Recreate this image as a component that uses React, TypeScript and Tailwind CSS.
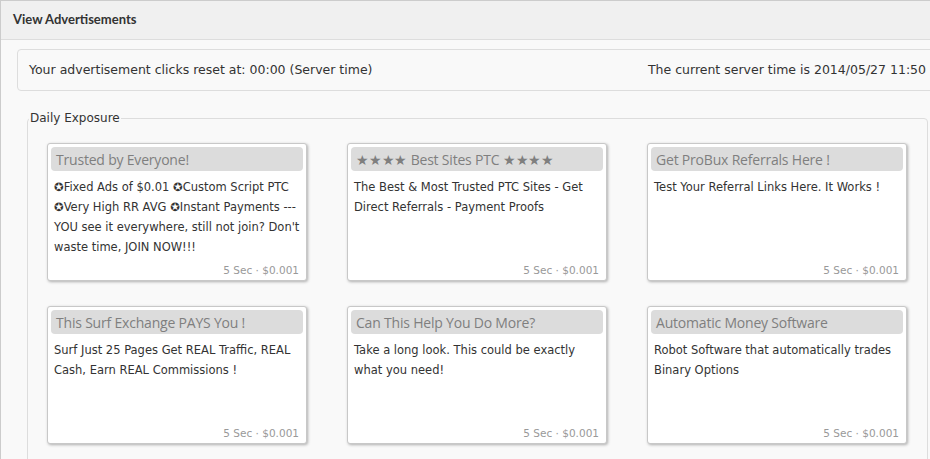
import React from "react";

const ads = [
  {
    title: "Trusted by Everyone!",
    body: "✪Fixed Ads of $0.01 ✪Custom Script PTC ✪Very High RR AVG ✪Instant Payments --- YOU see it everywhere, still not join? Don't waste time, JOIN NOW!!!",
  },
  {
    title: "★★★★ Best Sites PTC ★★★★",
    body: "The Best & Most Trusted PTC Sites - Get Direct Referrals - Payment Proofs",
  },
  {
    title: "Get ProBux Referrals Here !",
    body: "Test Your Referral Links Here. It Works !",
  },
  {
    title: "This Surf Exchange PAYS You !",
    body: "Surf Just 25 Pages Get REAL Traffic, REAL Cash, Earn REAL Commissions !",
  },
  {
    title: "Can This Help You Do More?",
    body: "Take a long look. This could be exactly what you need!",
  },
  {
    title: "Automatic Money Software",
    body: "Robot Software that automatically trades Binary Options",
  },
];

const verdana = "font-['DejaVu_Sans',Verdana,sans-serif]";
const trebuchet = "font-['Open_Sans','Trebuchet_MS',sans-serif]";

function AdCard({ title, body }: { title: string; body: string }) {
  return (
    <div className="flex h-[138px] w-[260px] flex-col rounded-[3px] border border-[#c8c8c8] bg-white p-[3px] shadow-[1px_1px_3px_rgba(0,0,0,0.3)]">
      <div
        className={`flex h-[24px] items-center rounded-[4px] bg-[#dcdcdc] px-[5px] text-[14px] text-[#7f7f7f] ${trebuchet}`}
      >
        <span className="whitespace-nowrap tracking-[-0.2px]">{title}</span>
      </div>
      <div
        className={`mt-[6px] flex-1 px-[3px] text-[11.5px] leading-[20px] text-[#333] ${verdana}`}
      >
        {body}
      </div>
      <div
        className={`pr-[4px] text-right text-[10.5px] leading-[14px] text-[#999] ${verdana}`}
      >
        5 Sec · $0.001
      </div>
    </div>
  );
}

export default function App() {
  return (
    <div className="h-[459px] w-[930px] overflow-hidden bg-[#f9f9f9]">
      <div className="w-[960px] border-l border-t border-[#cccccc] bg-[#f9f9f9]">
        <div className="flex h-[39px] items-center border-b border-[#dddddd] bg-[#f0f0f0] pl-[12px]">
          <span className="font-['Lato',sans-serif] text-[13px] font-bold text-[#333]">
            View Advertisements
          </span>
        </div>
        <div className="pt-[9px]">
          <div
            className={`mx-[16px] flex h-[42px] items-center justify-between rounded-[4px] border border-[#dddddd] bg-[#f9f9f9] pl-[11px] pr-[17px] pt-[1px] text-[12.5px] text-[#333] ${verdana}`}
          >
            <span>Your advertisement clicks reset at: 00:00 (Server time)</span>
            <span>The current server time is 2014/05/27 11:50</span>
          </div>
          <fieldset className="ml-[26px] mr-[32px] mt-[18px] rounded-[4px] border border-[#dddddd] p-0">
            <legend
              className={`ml-[1px] px-[1px] text-[12px] text-[#333] ${verdana}`}
            >
              Daily Exposure
            </legend>
            <div className="grid grid-cols-[260px_260px_260px] gap-x-[40px] gap-y-[25px] px-[19px] pb-[20px] pt-[16px]">
              {ads.map((a) => (
                <AdCard key={a.title} title={a.title} body={a.body} />
              ))}
            </div>
          </fieldset>
        </div>
      </div>
    </div>
  );
}
